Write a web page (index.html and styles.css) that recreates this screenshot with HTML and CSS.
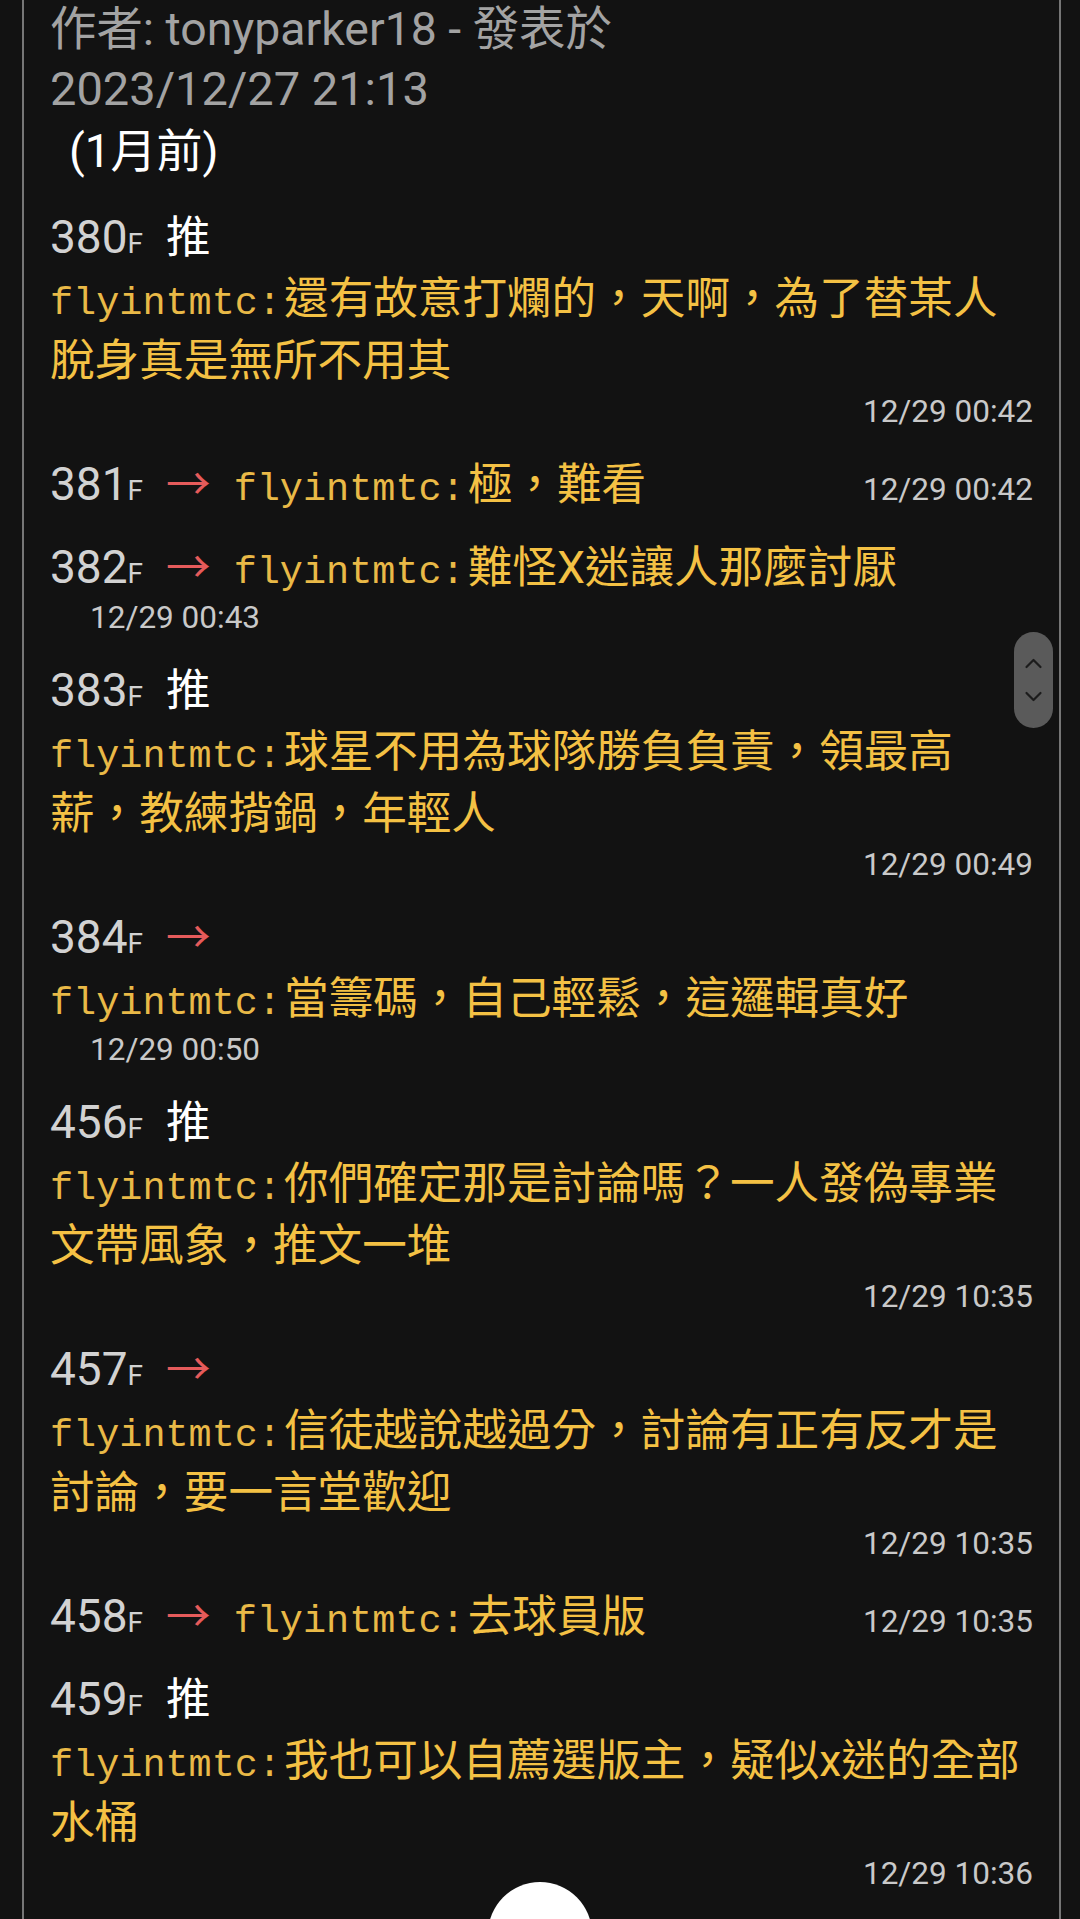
FILE: index.html
```html
<!DOCTYPE html>
<html lang="zh-Hant">
<head>
<meta charset="utf-8">
<title>推文</title>
<link rel="stylesheet" href="styles.css">
</head>
<body>
<div class="page">
  <div class="meta">
    <div class="author">作者: tonyparker18 - 發表於</div>
    <div class="date">2023/12/27 21:13</div>
    <div class="ago">(1月前)</div>
  </div>

  <div class="push">
    <div class="head"><span class="num">380</span><span class="f">F</span><span class="tag good">推</span></div>
    <div class="body"><span class="uid">flyintmtc:</span><span class="text">還有故意打爛的，天啊，為了替某人脫身真是無所不用其</span></div>
    <div class="time right">12/29 00:42</div>
  </div>

  <div class="push">
    <div class="head flex"><span class="num">381</span><span class="f">F</span><span class="tag arrow">→</span><span class="uid">flyintmtc:</span><span class="text">極，難看</span><span class="time">12/29 00:42</span></div>
  </div>

  <div class="push">
    <div class="head"><span class="num">382</span><span class="f">F</span><span class="tag arrow">→</span><span class="uid">flyintmtc:</span><span class="text">難怪X迷讓人那麼討厭</span></div>
    <div class="time indent">12/29 00:43</div>
  </div>

  <div class="push">
    <div class="head"><span class="num">383</span><span class="f">F</span><span class="tag good">推</span></div>
    <div class="body"><span class="uid">flyintmtc:</span><span class="text">球星不用為球隊勝負負責，領最高薪，教練揹鍋，年輕人</span></div>
    <div class="time right">12/29 00:49</div>
  </div>

  <div class="push">
    <div class="head"><span class="num">384</span><span class="f">F</span><span class="tag arrow">→</span></div>
    <div class="body"><span class="uid">flyintmtc:</span><span class="text">當籌碼，自己輕鬆，這邏輯真好</span></div>
    <div class="time indent">12/29 00:50</div>
  </div>

  <div class="push">
    <div class="head"><span class="num">456</span><span class="f">F</span><span class="tag good">推</span></div>
    <div class="body"><span class="uid">flyintmtc:</span><span class="text">你們確定那是討論嗎？一人發偽專業文帶風象，推文一堆</span></div>
    <div class="time right">12/29 10:35</div>
  </div>

  <div class="push">
    <div class="head"><span class="num">457</span><span class="f">F</span><span class="tag arrow">→</span></div>
    <div class="body"><span class="uid">flyintmtc:</span><span class="text">信徒越說越過分，討論有正有反才是討論，要一言堂歡迎</span></div>
    <div class="time right">12/29 10:35</div>
  </div>

  <div class="push">
    <div class="head flex"><span class="num">458</span><span class="f">F</span><span class="tag arrow">→</span><span class="uid">flyintmtc:</span><span class="text">去球員版</span><span class="time">12/29 10:35</span></div>
  </div>

  <div class="push">
    <div class="head"><span class="num">459</span><span class="f">F</span><span class="tag good">推</span></div>
    <div class="body"><span class="uid">flyintmtc:</span><span class="text">我也可以自薦選版主，疑似x迷的全部水桶</span></div>
    <div class="time right">12/29 10:36</div>
  </div>
</div>

<div class="scroller">
  <svg width="39" height="96" viewBox="0 0 39 96">
    <polyline points="12.5,35 19.5,28 26.5,35" fill="none" stroke="#1c1c1c" stroke-width="2.2" stroke-linecap="round" stroke-linejoin="round"/>
    <polyline points="12.5,61 19.5,68 26.5,61" fill="none" stroke="#1c1c1c" stroke-width="2.2" stroke-linecap="round" stroke-linejoin="round"/>
  </svg>
</div>
<div class="fab"></div>
</body>
</html>
```

FILE: styles.css
```css
* {
  box-sizing: border-box;
}

html,
body {
  margin: 0;
  padding: 0;
  background: #121212;
}

body {
  font-family: Roboto, "Noto Sans CJK TC", sans-serif;
  height: 1919px;
  overflow: hidden;
}

.page {
  margin-left: 22px;
  width: 1039px;
  border: 2px solid #767676;
  border-top: none;
  padding: 0 26px 4px 26px;
  background: #121212;
}

.author,
.date {
  font-size: 47px;
  line-height: 59px;
  color: #a3a3a3;
}

.author {
  font-size: 46.4px;
}

.ago {
  font-size: 46px;
  line-height: 62px;
  color: #ffffff;
  padding-left: 19px;
  margin-top: 2px;
  margin-bottom: 24px;
}

.push {
  font-size: 46px;
  line-height: 62px;
  margin-bottom: 21px;
}

.head.flex {
  display: flex;
  align-items: baseline;
}

.num {
  color: #d2d2d2;
}

.f {
  font-size: 28px;
  line-height: 1;
  color: #d2d2d2;
}

.tag {
  font-family: "Noto Sans CJK TC", sans-serif;
  font-size: 44.6px;
  line-height: 1;
  margin-left: 23px;
}

.tag.good {
  color: #ffffff;
}

.tag.arrow {
  color: #e55b5b;
}

.body {
  font-size: 44.6px;
  line-height: 62px;
  color: #f4c144;
}

.uid {
  font-family: "Liberation Mono", monospace;
  font-size: 38.5px;
  line-height: 1;
  color: #e9b947;
  margin-right: 3px;
}

.head .uid {
  margin-left: 23px;
}

.text {
  color: #f4c144;
}

.head .text {
  font-size: 44.6px;
  line-height: 1;
}

.time {
  font-size: 31.5px;
  line-height: 40px;
  color: #c9c9c9;
}

.time.right {
  text-align: right;
}

.time.indent {
  padding-left: 40px;
}

.head.flex .time {
  margin-left: auto;
  line-height: 1;
}

.scroller {
  position: fixed;
  left: 1014px;
  top: 632px;
  width: 39px;
  height: 96px;
  border-radius: 20px;
  background: #5a5a5a;
}

.scroller svg {
  display: block;
}

.fab {
  position: fixed;
  left: 488px;
  top: 1882px;
  width: 104px;
  height: 104px;
  border-radius: 50%;
  background: #ffffff;
}
```
